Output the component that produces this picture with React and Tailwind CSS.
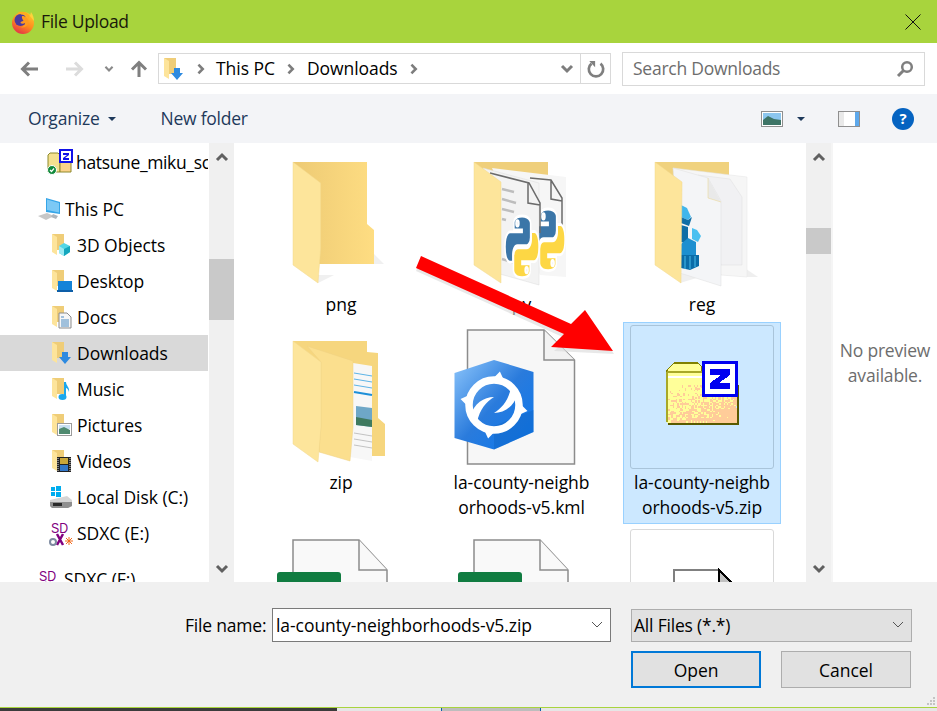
import React from 'react'

const SIDE_CHILDREN = [
  { label: 'This PC', kind: 'pc', top: true },
  { label: '3D Objects', kind: 'cube' },
  { label: 'Desktop', kind: 'desktop' },
  { label: 'Docs', kind: 'docs' },
  { label: 'Downloads', kind: 'down', active: true },
  { label: 'Music', kind: 'music' },
  { label: 'Pictures', kind: 'pictures' },
  { label: 'Videos', kind: 'videos' },
  { label: 'Local Disk (C:)', kind: 'disk', drive: true },
  { label: 'SDXC (E:)', kind: 'sd', drive: true },
]

const Chevron = ({ dir = 'right', className = '', color = '#7d7d7d', width = 3 }) => {
  const paths = {
    right: 'M4 2l5 5-5 5',
    down: 'M2 4l5 5 5-5',
    up: 'M2 10l5-5 5 5',
  }
  return (
    <svg viewBox="0 0 14 14" className={className}>
      <path d={paths[dir]} fill="none" stroke={color} strokeWidth={width} />
    </svg>
  )
}

const Firefox = () => (
  <svg viewBox="0 0 24 24" className="w-6 h-6 shrink-0">
    <defs>
      <linearGradient id="ffo" x1="0.8" y1="0" x2="0.3" y2="1">
        <stop offset="0" stopColor="#ffcb2e" />
        <stop offset="0.55" stopColor="#ff8a1e" />
        <stop offset="1" stopColor="#e3314a" />
      </linearGradient>
    </defs>
    <circle cx="12" cy="13" r="11" fill="url(#ffo)" />
    <circle cx="9.500" cy="10" r="6" fill="#4a3a9e" />
    <path d="M11 6c4 0 6.500 2.500 6.500 6 0 3.500-4 6.500-8 5 2.500 0 5-2 4.500-4-1 1-3.500 1-4.500 0 0-1 1-2 3-2-1-2-2-3-1.500-5z" fill="#ff9a1f" />
    <path d="M7 2c1 2 3 2.500 5 2.500s5 2 5.500 5C20 6 17 2.500 13 2c-2-.3-4-.3-6 0z" fill="#ffab1f" />
    <path d="M20 2c2 3 3 6 3 9l-4-5z" fill="#ffd23b" />
  </svg>
)

const Arrow = ({ color, className }) => (
  <svg viewBox="0 0 20 18" className={className}>
    <path d="M19 9H4M10 2.5L3.5 9l6.5 6.5" fill="none" stroke={color} strokeWidth="3" />
  </svg>
)

const SmallFolderBody = () => (
  <>
    <path d="M1 1h12v16H5z" fill="#efcd78" />
    <path d="M1 1l5 3v18l-5-3z" fill="#fde49b" />
  </>
)

const Overlay = ({ kind }) => {
  switch (kind) {
    case 'cube':
      return (
        <>
          <path d="M8 13l5-3 6 3v6l-6 4-5-3z" fill="#53d6e6" />
          <path d="M13 16l6-3v6l-6 4z" fill="#14a6bd" />
          <path d="M8 13l5 3v7l-5-3z" fill="#9be9f2" />
        </>
      )
    case 'desktop':
      return (
        <>
          <rect x="7" y="12" width="14" height="9" fill="#1383d8" />
          <rect x="6" y="21" width="16" height="2" fill="#0d5ea8" />
        </>
      )
    case 'docs':
      return (
        <>
          <path d="M8 8h8l4 4v11H8z" fill="#f6f6f6" stroke="#8c8c8c" />
          <path d="M10 12h3M10 15h8M10 17h8M10 19h8M10 21h8" stroke="#4a8bc2" strokeWidth="1" />
        </>
      )
    case 'down':
      return <path d="M11 11h6v5h3l-6 7-6-7h3z" fill="#2d8ae0" />
    case 'music':
      return (
        <>
          <path d="M13 5h2c0 4 4 5 3 10-1-3-2-4-3-4v9h-2z" fill="#1aa7ec" />
          <ellipse cx="11.5" cy="20" rx="4" ry="3" fill="#1aa7ec" />
        </>
      )
    case 'pictures':
      return (
        <>
          <rect x="6.5" y="10.5" width="14" height="12" fill="#fff" stroke="#9b9b9b" />
          <path d="M8 12h11v4H8z" fill="#c8dff1" />
          <path d="M8 16l5-2 6 3v4H8z" fill="#4f8a70" />
        </>
      )
    case 'videos':
      return (
        <>
          <rect x="6" y="8" width="14" height="15" fill="#222" />
          <rect x="9" y="9" width="8" height="6" fill="#c9a63a" />
          <rect x="9" y="16" width="8" height="6" fill="#3277c9" />
          <path d="M7 9v13M19 9v13" stroke="#ddd" strokeWidth="1" strokeDasharray="1 1" />
        </>
      )
    default:
      return null
  }
}

const SideIcon = ({ kind }) => {
  if (kind === 'pc') {
    return (
      <svg viewBox="0 0 26 24" className="w-[26px] h-6 shrink-0">
        <path d="M9 1l14 4v12L9 15z" fill="#35a5e8" />
        <path d="M10 2.5l12 3.5v9.5L10 13z" fill="#7cc9f5" />
        <path d="M1 19l9-3 7 3-8 4z" fill="#c7c7c7" />
        <path d="M16 17l5 2-2 3-5-2z" fill="#aeb6bd" />
      </svg>
    )
  }
  if (kind === 'disk') {
    return (
      <svg viewBox="0 0 24 24" className="w-6 h-6 shrink-0">
        <path d="M2 2h4v4H2zM7 1h5v5H7zM2 7h4v4H2zM7 7h5v5H7z" fill="#00adef" />
        <path d="M1 15l17-4 5 4v6l-4 2H3l-2-2z" fill="#d5d5d5" />
        <path d="M1 17h22v4l-4 2H3l-2-2z" fill="#8f8f8f" />
        <rect x="4" y="18" width="9" height="3" fill="#2a2a2a" />
      </svg>
    )
  }
  if (kind === 'sd') {
    return (
      <svg viewBox="0 0 24 26" className="w-6 h-[26px] shrink-0">
        <text x="2" y="13" fontFamily="Liberation Sans" fontSize="15" fill="#800080" textLength="17" lengthAdjust="spacingAndGlyphs">SD</text>
        <path d="M8 14l6 11M14 14L8 25" stroke="#800080" strokeWidth="2.500" />
        <circle cx="4" cy="22" r="3" fill="none" stroke="#7d8aa0" strokeWidth="2" />
        <path d="M17 18l6 6M23 18l-6 6M20 17v8M16 21h8" stroke="#f26b1d" strokeWidth="1" />
      </svg>
    )
  }
  return (
    <svg viewBox="0 0 24 24" className="w-6 h-6 shrink-0">
      <SmallFolderBody />
      <Overlay kind={kind} />
    </svg>
  )
}

const ZipSmall = () => (
  <svg viewBox="0 0 26 26" className="w-[26px] h-[26px] shrink-0">
    <path d="M1 6l2-2h8l2 2v17H1z" fill="#f4e08f" stroke="#8e8a2c" />
    <path d="M13 10h11v13H13z" fill="#fbd28a" stroke="#8e8a2c" />
    <rect x="13" y="1" width="12" height="12" fill="#fff" stroke="#1010e8" strokeWidth="2" />
    <path d="M16 4h6v2l-4 3h4v2h-6V9l4-3h-4z" fill="#1010e8" />
    <circle cx="5" cy="21" r="4.5" fill="#128a3c" stroke="#fff" />
    <path d="M3 21l1.5 1.5L7 19.5" fill="none" stroke="#fff" strokeWidth="1.2" />
  </svg>
)

const FolderBase = ({ id }) => (
  <>
    <defs>
      <linearGradient id={id}>
        <stop offset="0" stopColor="#edca74" />
        <stop offset="1" stopColor="#fedd82" />
      </linearGradient>
    </defs>
    <path d="M49 136l16-8H49zM105 107l10 10h-10z" fill="#f0f0f0" />
    <path d="M24 15h74v62l7 6v34H50z" fill={`url(#${id})`} />
  </>
)

const FrontFlap = () => <path d="M24 15l27.7 21v65L49 136l-25-18z" fill="#fde59b" stroke="#f3d98d" strokeWidth="0.5" />

const PngFolder = () => (
  <svg viewBox="0 0 144 144" className="w-full h-full">
    <FolderBase id="pngback" />
    <FrontFlap />
  </svg>
)

const PY_PATH = 'M54.9 0C27 0 28.7 12.1 28.7 12.1v12.5h26.6v3.8H18.2S0 26.3 0 54.8s15.9 27.5 15.9 27.5h9.5V69s-.5-15.9 15.6-15.9h26.6s15.1.2 15.1-14.6V14.1S84.1 0 54.9 0zM40.2 8.4a4.8 4.8 0 110 9.6 4.8 4.8 0 010-9.6z'

const PyMark = ({ x, y }) => (
  <g transform={`translate(${x} ${y}) scale(0.31 0.56)`}>
    <path d={PY_PATH} fill="#3b76a8" stroke="#fff" strokeWidth="5" />
    <g transform="rotate(180 55 55)">
      <path d={PY_PATH} fill="#fdd744" stroke="#fff" strokeWidth="5" />
    </g>
  </g>
)

const PyFolder = () => (
  <svg viewBox="0 0 144 144" className="w-full h-full">
    <path d="M24 15h74v110H50z" fill="#efcf7b" />
    <path d="M42 21l74 9v100l-26-2z" fill="#f6f6f6" />
    <path d="M80 31l21 2 11 18v50M101 33v19l11 2" fill="none" stroke="#6b6b6b" strokeWidth="1.5" />
    <PyMark x={81} y={62} />
    <path d="M33 21l56 15v102l-39-11z" fill="#f3f3f3" stroke="#dcdcdc" strokeWidth="0.5" />
    <path d="M40 26l39 10 11 20v30M78 36v20l12 2" fill="none" stroke="#6b6b6b" strokeWidth="1.5" />
    <path d="M52 42l12 3M52 52l14 4M52 62l12 3M52 72l4 1M52 112l16 5" stroke="#bdbdbd" strokeWidth="2.5" />
    <PyMark x={55} y={69} />
    <path d="M24 15l27 20v101l-27-18z" fill="#fde59b" stroke="#f3d98d" strokeWidth="0.5" />
  </svg>
)

const RegFolder = () => (
  <svg viewBox="0 0 144 144" className="w-full h-full">
    <path d="M116 122l12 8h-12zM50 136l20-6-20-4z" fill="#efefef" />
    <path d="M25 15h74v110H50z" fill="#f0d27e" />
    <path d="M43 21l74 9v100l-26-2z" fill="#f6f6f6" stroke="#e4e4e4" strokeWidth="0.5" />
    <path d="M68 28l32 4 12 18v68l-21 0z" fill="#f1f1f3" stroke="#dedede" strokeWidth="0.5" />
    <path d="M43 21l35 10 13 23v85l-41-13z" fill="#f4f5f7" stroke="#dedede" strokeWidth="0.5" />
    <path d="M78 31v20l13 4" fill="#e9e9e9" stroke="#ead48a" strokeWidth="0.5" />
    <path d="M51 58l6 3 4 9-3 3-7-3z" fill="#3fb6ec" />
    <path d="M51 70l7 3 4-3-3 9-8-3z" fill="#0f6ea6" />
    <path d="M51 78l7 2v17l-7-2z" fill="#0f6ea6" />
    <path d="M62 81l5 2 4 6-3 6-6-3z" fill="#4bc0f0" />
    <path d="M51 97l7-6 8 4v13h-15z" fill="#1d8fd0" />
    <path d="M51 108h18v11l-9 4-9-2z" fill="#0b6ca8" />
    <path d="M55 109v13M60 109v13M65 109v11" stroke="#4bbdec" strokeWidth="1" />
    <path d="M25 15l27 20-1 101-26-18z" fill="#fde59b" stroke="#f3d98d" strokeWidth="0.5" />
  </svg>
)

const ZipFolder = () => (
  <svg viewBox="0 0 144 144" className="w-full h-full">
    <path d="M24 16h74v11l11 1v65l7 6v32h-15L50 127z" fill="#f6d67e" />
    <path d="M84 38l19 3v95l-22-4z" fill="#f7f7f7" />
    <path d="M85 48l18 3M85 54l18 3M85 60l18 3" stroke="#5db4e6" strokeWidth="1" />
    <path d="M85 67l18 3" stroke="#1d8fd8" strokeWidth="2" />
    <path d="M87 81l16 2v19l-16-2z" fill="#6ea7c7" />
    <path d="M87 92l16 3v7l-16-2z" fill="#3f7a5f" />
    <path d="M85 108l18 3M85 114l18 3M85 120l18 3" stroke="#b5b5b5" strokeWidth="0.8" />
    <path d="M38 21l46 15v66l-3 34-31-9 2-25V37z" fill="#fbdf8e" stroke="#efd182" strokeWidth="0.5" />
    <path d="M24 16l28 21v65l-3 35-25-18z" fill="#fde59b" stroke="#f3d98d" strokeWidth="0.5" />
  </svg>
)

const KmlDoc = () => (
  <svg viewBox="0 0 144 144" className="w-full h-full">
    <defs>
      <linearGradient id="kmlhex" x1="0" y1="0" x2="1" y2="1">
        <stop offset="0" stopColor="#8cc5fb" />
        <stop offset="0.5" stopColor="#2a7bdc" />
        <stop offset="1" stopColor="#0a78ef" />
      </linearGradient>
    </defs>
    <path d="M17.5 5H94l30.5 30v104h-107z" fill="#f7f7f7" stroke="#8c8c8c" strokeWidth="1.5" />
    <path d="M94 5v30h30.5" fill="#f2f2f2" stroke="#8c8c8c" strokeWidth="1.5" />
    <path d="M44 35l39.5 12v60L44 124.5 4.500 113V48z" fill="url(#kmlhex)" />
    <path d="M44 124.5V101L83.500 85v22z" fill="#0e5fb8" opacity="0.35" />
    <circle cx="44" cy="80" r="25" fill="none" stroke="#fff" strokeWidth="7.500" />
    <g transform="rotate(10 44 80)">
      <path d="M44 46l5.500 8h-11zM44 114l-5.500-8h11zM10 80l8-5.500v11zM78 80l-8 5.500v-11z" fill="#fff" />
    </g>
    <path d="M20 92C24 78 34 72 44 72 36 77 30 84 27 97z" fill="#fff" />
    <path d="M68 68C64 82 54 88 44 88 52 83 58 76 61 63z" fill="#fff" />
  </svg>
)

const dither = () => {
  const dots = []
  for (let y = 60; y < 98; y += 1.5) {
    for (let x = 38; x < 106; x += 1.5) {
      const v = Math.sin(x * 12.9 + y * 78.2) * 43758.5
      const r = v - Math.floor(v)
      const t = (x - 38) / 68 + (y - 60) / 38
      if (r < t * 0.55) dots.push(<rect key={`${x}-${y}`} x={x} y={y} width="1.5" height="1.5" fill="#ffcc99" />)
    }
  }
  return dots
}

const ZipLarge = () => (
  <svg viewBox="0 0 144 144" className="w-full h-full" shapeRendering="crispEdges">
    <path d="M44 38h24l4 4v6H37v-3z" fill="#ffff99" stroke="#808000" strokeWidth="1.2" />
    <rect x="37" y="48" width="69" height="50" fill="#ffff99" />
    <rect x="37.500" y="51" width="68" height="1.5" fill="#fff" />
    {dither()}
    <path d="M37 47h35M37 47v50" stroke="#a8a828" strokeWidth="1.5" fill="none" />
    <path d="M38 98.500h69.500V60" stroke="#5a5a00" strokeWidth="2" fill="none" />
    <rect x="72" y="36" width="36" height="36" fill="#0000f0" />
    <rect x="75" y="39" width="30" height="30" fill="#fff" />
    <path d="M80 44h20v6l-11 8h11v6H80v-6l11-8H80z" fill="#0000f0" />
  </svg>
)

const ExcelDoc = () => (
  <svg viewBox="0 0 144 144" className="w-full h-full">
    <path d="M24 11h66l28 30v100H24z" fill="#f9f9f9" stroke="#8c8c8c" strokeWidth="1.5" />
    <path d="M90 11v30h28" fill="#f9f9f9" stroke="#8c8c8c" strokeWidth="1.5" />
    <rect x="8" y="43" width="64" height="60" rx="3" fill="#107c41" />
  </svg>
)

const ScriptDoc = () => (
  <svg viewBox="0 0 144 144" className="w-full h-full" shapeRendering="crispEdges">
    <path d="M44 40.500h45l14 14V100H44z" fill="#fff" stroke="#808080" strokeWidth="2" />
    <path d="M89 41l14 14H89z" fill="#c0c0c0" stroke="#000" strokeWidth="2" />
    <rect x="58" y="54" width="26" height="3" fill="#808080" />
  </svg>
)

const TILES = [
  { label: 'png', icon: <PngFolder /> },
  { label: 'py', icon: <PyFolder /> },
  { label: 'reg', icon: <RegFolder /> },
  { label: 'zip', icon: <ZipFolder /> },
  { label: 'la-county-neighb\norhoods-v5.kml', icon: <KmlDoc /> },
  { label: 'la-county-neighb\norhoods-v5.zip', icon: <ZipLarge />, selected: true },
  { label: '', icon: <ExcelDoc /> },
  { label: '', icon: <ExcelDoc /> },
  { label: '', icon: <ScriptDoc />, boxed: true },
]

const Tile = ({ label, icon, selected, boxed }) => (
  <div className={`w-[158px] border px-[6px] pt-[2px] pb-[3px] flex flex-col items-center ${selected ? 'bg-[#cce8ff] border-[#99d1ff]' : 'border-transparent'}`}>
    <div className={`w-[144px] h-[144px] rounded-[3px] border ${selected ? 'border-[#a9c4da]' : boxed ? 'border-[#d9d9d9]' : 'border-transparent'}`}>
      <div className="-m-px w-[144px] h-[144px]">{icon}</div>
    </div>
    <div className="mt-px text-center leading-[25px] text-black whitespace-pre-line">{label}</div>
  </div>
)

const ScrollBar = ({ className, thumb }) => (
  <div className={`w-[25px] shrink-0 bg-[#f0f0f0] flex flex-col items-center ${className}`}>
    <Chevron dir="up" color="#606060" className="w-[14px] h-[14px] mt-[7px]" />
    <div className={`w-full bg-[#c9c9c9] ${thumb}`} />
    <div className="flex-1" />
    <Chevron dir="down" color="#606060" className="w-[14px] h-[14px] mb-[6px]" />
  </div>
)

export default function App() {
  return (
    <div className="relative w-[937px] h-[711px] overflow-hidden flex flex-col bg-white text-[17.5px] tracking-[-0.05px] text-black" style={{ fontFamily: '"Open Sans", "Noto Sans", sans-serif' }}>
      {/* title bar */}
      <div className="h-[43px] shrink-0 bg-[#a8d43d] flex items-center pl-[11px] pr-[16px]">
        <Firefox />
        <span className="ml-[6px] text-[#1a1a0a] tracking-[-0.3px]">File Upload</span>
        <svg viewBox="0 0 16 16" className="ml-auto w-4 h-4">
          <path d="M.5.500l15 15M15.500.500l-15 15" stroke="#111" strokeWidth="1" />
        </svg>
      </div>

      {/* address row */}
      <div className="h-[51px] shrink-0 flex items-center pl-[19px] pr-[12px]">
        <Arrow color="#7f7f7f" className="w-5 h-[18px]" />
        <Arrow color="#dcdcdc" className="w-5 h-[18px] ml-[26px] rotate-180" />
        <Chevron dir="down" color="#8a8a8a" className="w-[10px] h-[10px] ml-[19px]" />
        <svg viewBox="0 0 18 18" className="w-[18px] h-[18px] ml-[16px]">
          <path d="M9 17V3M2 9.500L9 2.500l7 7" fill="none" stroke="#7f7f7f" strokeWidth="3" />
        </svg>
        <div className="ml-[10px] w-[453px] h-[31px] border border-[#d9d9d9] flex items-center">
          <svg viewBox="0 0 24 24" className="w-6 h-6 ml-[4px]">
            <SmallFolderBody />
            <Overlay kind="down" />
          </svg>
          <Chevron className="w-3 h-3 ml-[8px]" />
          <span className="ml-[9px]">This PC</span>
          <Chevron className="w-3 h-3 ml-[10px]" />
          <span className="ml-[10px]">Downloads</span>
          <Chevron className="w-3 h-3 ml-[10px]" />
          <Chevron dir="down" className="w-[14px] h-[14px] ml-auto mr-[6px]" />
          <div className="w-[30px] h-full border-l border-[#d9d9d9] flex items-center justify-center">
            <svg viewBox="0 0 20 20" className="w-[18px] h-[18px]">
              <path d="M5 4a8 8 0 1 0 10 0" fill="none" stroke="#7f7f7f" strokeWidth="3" />
              <path d="M2.500 1h6.500v7z" fill="#7f7f7f" />
            </svg>
          </div>
        </div>
        <div className="ml-[11px] w-[303px] h-[34px] border border-[#d9d9d9] flex items-center pl-[10px] pr-[10px] text-[#6d6d6d] tracking-[-0.25px]">
          Search Downloads
          <svg viewBox="0 0 18 18" className="ml-auto w-[18px] h-[18px]">
            <circle cx="11" cy="7" r="4.800" fill="none" stroke="#7f7f7f" strokeWidth="2.500" />
            <path d="M7.500 10.500L2 16" stroke="#7f7f7f" strokeWidth="3" />
          </svg>
        </div>
      </div>

      {/* toolbar */}
      <div className="h-[49px] shrink-0 bg-[#f3f4f7] flex items-center pl-[28px] pr-[23px] text-[#1e395b]">
        <span className="tracking-[-0.2px]">Organize</span>
        <svg viewBox="0 0 8 4" className="w-2 h-1 ml-[8px]"><path d="M0 0h8L4 4z" fill="#1e395b" /></svg>
        <span className="ml-[45px] tracking-[-0.25px]">New folder</span>
        <svg viewBox="0 0 22 16" className="ml-auto w-[22px] h-4">
          <rect x="0.500" y="0.500" width="21" height="15" fill="#fff" stroke="#8f8f8f" />
          <rect x="2" y="2" width="18" height="12" fill="#8cc6ee" />
          <path d="M2 9l5-4 6 3 7 1v5H2z" fill="#3d7466" />
        </svg>
        <svg viewBox="0 0 8 4" className="w-2 h-1 ml-[14px]"><path d="M0 0h8L4 4z" fill="#1e395b" /></svg>
        <svg viewBox="0 0 22 16" className="ml-[33px] w-[22px] h-4">
          <rect x="0.500" y="0.500" width="21" height="15" fill="#fff" stroke="#8f8f8f" />
          <rect x="17" y="1" width="4" height="14" fill="#5ea9ec" />
          <rect x="1" y="1" width="5" height="14" fill="#e9e9e9" />
        </svg>
        <div className="ml-[32px] w-[22px] h-[22px] rounded-full bg-[#0563c1] text-white font-bold text-[15px] flex items-center justify-center">?</div>
      </div>

      {/* main */}
      <div className="h-[439px] shrink-0 flex overflow-hidden">
        <div className="w-[209px] shrink-0 overflow-hidden pr-px">
          <div className="h-9 flex items-center pl-[47px] gap-[3px] mt-px overflow-hidden">
            <ZipSmall />
            <span className="whitespace-nowrap tracking-[-0.35px]">hatsune_miku_sc</span>
          </div>
          {SIDE_CHILDREN.map(item => (
            <div
              key={item.label}
              className={`h-9 flex items-center ${item.top ? 'mt-[11px] pl-[37px] gap-[2px]' : item.drive ? 'pl-[49px] gap-[4px]' : 'pl-[51px] gap-[2px]'} ${item.active ? 'bg-[#d9d9d9]' : ''}`}
            >
              <SideIcon kind={item.kind} />
              <span>{item.label}</span>
            </div>
          ))}
          <div className="h-9 mt-[10px] flex items-center pl-[37px] gap-[3px]">
            <div className="pt-[4px]">
              <SideIcon kind="sd" />
            </div>
            <span>SDXC (F:)</span>
          </div>
        </div>
        <ScrollBar thumb="h-[61px] mt-[95px]" />
        <div className="w-px shrink-0" />

        <div className="w-[571px] shrink-0 overflow-hidden pt-px pl-[27px]">
          <div className="grid grid-cols-[158px_158px_158px] grid-rows-[178px_204px_auto] gap-x-[22.5px] items-start">
            {TILES.map((tile, i) => (
              <Tile key={i} {...tile} />
            ))}
          </div>
        </div>
        <ScrollBar thumb="h-[26px] mt-[64px]" />
        <div className="w-[2px] shrink-0 bg-[#f5f5f5]" />
        <div className="flex-1 flex items-center justify-center text-center text-[#6d6d6d] leading-[25px] tracking-[-0.2px]">
          No preview
          <br />
          available.
        </div>
      </div>

      {/* bottom form */}
      <div className="flex-1 bg-[#f0f0f0] pt-[26px] flex flex-col">
        <div className="flex items-center h-[34px]">
          <span className="ml-[185px] w-[87px] tracking-[-0.2px]">File name:</span>
          <div className="w-[339px] h-full bg-white border border-[#7a7a7a] flex items-center pl-[3px] pr-[6px]">
            la-county-neighborhoods-v5.zip
            <Chevron dir="down" color="#555" width={1} className="ml-auto w-[14px] h-[14px]" />
          </div>
          <div className="ml-[20px] w-[281px] h-[33px] bg-[#e1e1e1] border border-[#adadad] flex items-center pl-[2px] pr-[6px] tracking-[-0.2px]">
            All Files (*.*)
            <Chevron dir="down" color="#555" width={1} className="ml-auto w-[14px] h-[14px]" />
          </div>
        </div>
        <div className="flex mt-[9px] ml-[631px] gap-[20px]">
          <div className="w-[130px] h-[37px] pt-px bg-[#e1e1e1] border-2 border-[#0078d7] flex items-center justify-center">Open</div>
          <div className="w-[130px] h-[37px] pt-px bg-[#e1e1e1] border border-[#adadad] flex items-center justify-center">Cancel</div>
        </div>
      </div>

      {/* strip of the window below */}
      <div className="h-[4px] shrink-0 border-t border-[#a8d43d] flex">
        <div className="w-[337px] bg-[#3b3b3b]" />
        <div className="w-[104px] bg-[#e6e6e6]" />
        <div className="w-[100px] bg-[#bdbdbd] border-x border-[#0b5cad]" />
        <div className="flex-1 bg-[#e6e6e6]" />
      </div>

      {/* red arrow laid over the dialog */}
      <svg viewBox="0 0 937 711" className="absolute inset-0 w-[937px] h-[711px] pointer-events-none">
        <path d="M420 258L574 329 586 312 613 352 553 349 566 337 415 269z" fill="#d8d8d8" transform="translate(1 2)" opacity="0.6" />
        <path d="M421 256L571 324 585 310 613 351 551 347 564 334 416 268z" fill="#ff0000" />
      </svg>

      {/* resize grip */}
      <svg viewBox="0 0 10 10" className="absolute right-[1px] bottom-[5px] w-[10px] h-[10px]">
        <path d="M7 1h2v2H7zM4 4h2v2H4zM7 4h2v2H7zM1 7h2v2H1zM4 7h2v2H4zM7 7h2v2H7z" fill="#c4c4c4" />
      </svg>
    </div>
  )
}
